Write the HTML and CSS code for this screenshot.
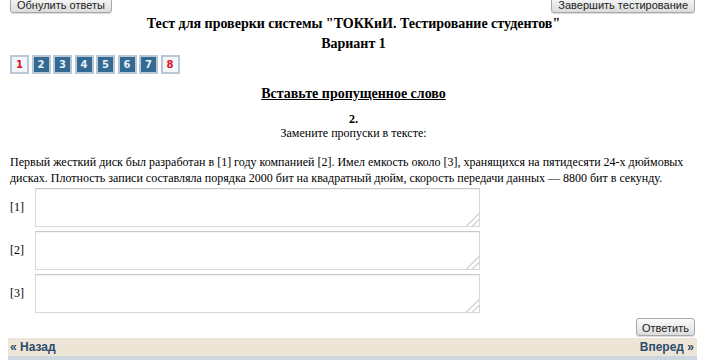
FILE: index.html
```html
<!DOCTYPE html>
<html lang="ru">
<head>
    <meta charset="UTF-8">
    <title>Тестирование студентов</title>
    <link rel="stylesheet" href="styles.css">
</head>
<body>
    <div class="top-bar">
        <button class="btn">Обнулить ответы</button>
        <button class="btn">Завершить тестирование</button>
    </div>

    <h1 class="test-title">Тест для проверки системы "ТОККиИ. Тестирование студентов"<br>Вариант 1</h1>

    <div class="question-nav">
        <a class="qbox done">1</a>
        <a class="qbox">2</a>
        <a class="qbox">3</a>
        <a class="qbox">4</a>
        <a class="qbox">5</a>
        <a class="qbox">6</a>
        <a class="qbox">7</a>
        <a class="qbox done">8</a>
    </div>

    <h2 class="task-type">Вставьте пропущенное слово</h2>
    <div class="task-num">2.</div>
    <div class="task-hint">Замените пропуски в тексте:</div>

    <p class="task-text">Первый жесткий диск был разработан в [1] году компанией [2]. Имел емкость около [3], хранящихся на пятидесяти 24-х дюймовых дисках. Плотность записи составляла порядка 2000 бит на квадратный дюйм, скорость передачи данных — 8800 бит в секунду.</p>

    <div class="answers">
        <div class="answer-row">
            <label>[1]</label>
            <textarea></textarea>
        </div>
        <div class="answer-row">
            <label>[2]</label>
            <textarea></textarea>
        </div>
        <div class="answer-row">
            <label>[3]</label>
            <textarea></textarea>
        </div>
    </div>

    <div class="submit-row">
        <button class="btn">Ответить</button>
    </div>

    <div class="pager">
        <a href="#">« Назад</a>
        <a href="#">Вперед »</a>
    </div>
    <div class="pager-strip"></div>
</body>
</html>
```

FILE: styles.css
```css
body {
    font-family: 'Liberation Serif', 'Times New Roman', serif;
    font-size: 12px;
    color: #000;
    background-color: #fff;
    margin: 0;
    padding: 0 11px 0 10px;
}
.top-bar {
    display: flex;
    justify-content: space-between;
    margin-top: -5px;
    padding-right: 2px;
}
.btn {
    font-family: 'Liberation Sans', Arial, sans-serif;
    font-size: 11px;
    color: #222;
    background: linear-gradient(#fbfbfb, #dcdcdc);
    border: 1px solid #a8a8a8;
    border-radius: 3px;
    padding: 1px 6px 0;
    height: 18px;
    line-height: 14px;
    box-shadow: 0 1px 1px rgba(0,0,0,0.15);
}
.test-title {
    font-size: 14px;
    font-weight: bold;
    text-align: center;
    line-height: 20px;
    margin: 1px 0 0;
}
.question-nav {
    display: flex;
    gap: 2.5px;
    margin-top: 1px;
}
.qbox {
    display: flex;
    align-items: center;
    justify-content: center;
    width: 15px;
    height: 15px;
    border: 2px solid #b9c8d4;
    background-color: #336a94;
    color: #e8eef4;
    font-family: Verdana, 'DejaVu Sans', sans-serif;
    font-size: 10px;
    font-weight: bold;
    text-decoration: none;
}
.qbox.done {
    background-color: #f2f6f9;
    color: #e0102a;
}
.task-type {
    font-size: 14px;
    font-weight: bold;
    text-decoration: underline;
    text-align: center;
    margin: 11px 0 0;
    line-height: 18px;
}
.task-num {
    font-weight: bold;
    text-align: center;
    margin-top: 9px;
    line-height: 14px;
}
.task-hint {
    text-align: center;
    line-height: 14px;
}
.task-text {
    margin: 14px 0 0;
    line-height: 16px;
}
.answers {
    display: flex;
    flex-direction: column;
    gap: 4px;
    margin-top: 2px;
}
.answer-row {
    display: flex;
    align-items: center;
}
.answer-row label {
    width: 25px;
}
.answer-row textarea {
    width: 441px;
    height: 35px;
    border: 1px solid #d8d8d8;
    border-top-color: #c8c8c8;
    box-shadow: inset 0 1px 1px rgba(0,0,0,0.05);
    padding: 1px;
    margin: 0;
    resize: vertical;
}
.answer-row textarea::-webkit-resizer {
    background: linear-gradient(135deg, transparent 55%, #d6d6d6 55%, #d6d6d6 62%, transparent 62%, transparent 75%, #d6d6d6 75%, #d6d6d6 82%, transparent 82%);
}
.submit-row {
    display: flex;
    justify-content: flex-end;
    margin-top: 5px;
    padding-right: 2px;
}
.submit-row .btn {
    padding: 1px 5px 0;
}
.pager {
    display: flex;
    justify-content: space-between;
    background-color: #ede6d6;
    margin: 2px 0 0 -2px;
    padding: 2px 3px 2px 2px;
    height: 14px;
    line-height: 14px;
}
.pager a {
    font-family: 'Liberation Sans', Arial, sans-serif;
    font-size: 12px;
    font-weight: bold;
    color: #2c4b6c;
    text-decoration: none;
}
.pager-strip {
    height: 6px;
    margin-left: -2px;
    background-color: #cbd6de;
}
```
